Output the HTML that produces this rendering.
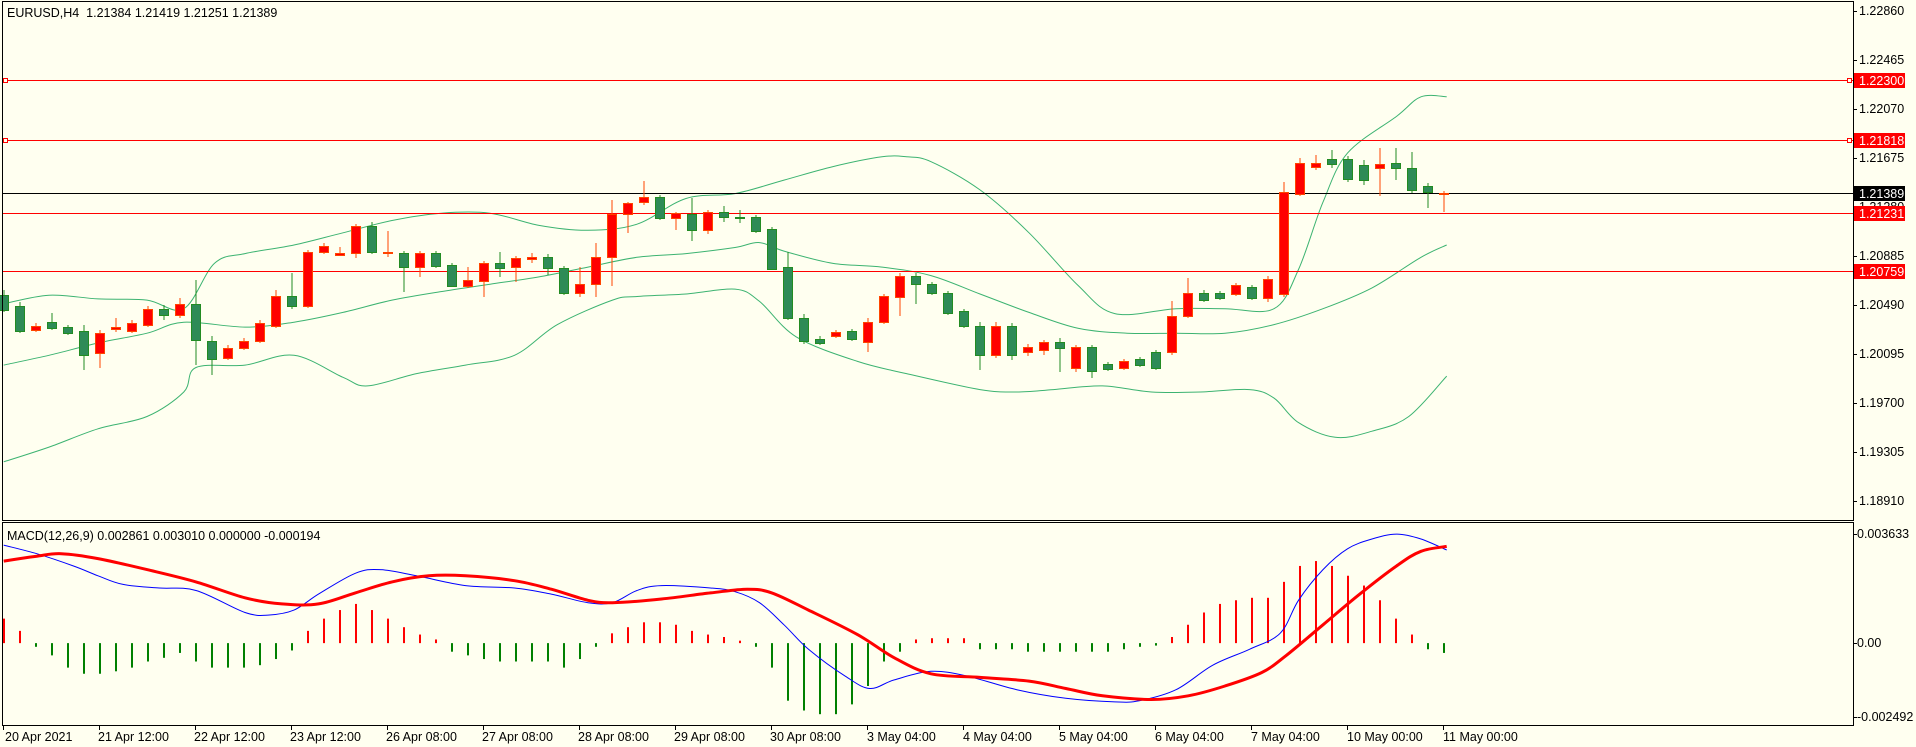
<!DOCTYPE html>
<html><head><meta charset="utf-8"><style>
html,body{margin:0;padding:0;background:#fffff0;}
svg{display:block;font-family:"Liberation Sans",sans-serif;font-size:12.5px;}
</style></head><body>
<svg id="s" width="1916" height="747" viewBox="0 0 1916 747" xmlns="http://www.w3.org/2000/svg">
<rect x="0" y="0" width="1916" height="747" fill="#fffff0"/>
<g id="bands" fill="none" stroke="#3cb371" stroke-width="1"></g>
<g id="hl">
<line x1="2" y1="80.5" x2="1853" y2="80.5" stroke="#ff0000"/>
<line x1="2" y1="140.5" x2="1853" y2="140.5" stroke="#ff0000"/>
<line x1="2" y1="193.5" x2="1853" y2="193.5" stroke="#000"/>
<line x1="2" y1="213.5" x2="1853" y2="213.5" stroke="#ff0000"/>
<line x1="2" y1="271.5" x2="1853" y2="271.5" stroke="#ff0000"/>
<rect x="3.5" y="78.5" width="4" height="4" fill="#fffff0" stroke="#ff0000"/>
<rect x="3.5" y="138.5" width="4" height="4" fill="#fffff0" stroke="#ff0000"/>
<rect x="1847.5" y="78.5" width="4" height="4" fill="#fffff0" stroke="#ff0000"/>
<rect x="1847.5" y="138.5" width="4" height="4" fill="#fffff0" stroke="#ff0000"/>
</g>
<g id="candles"></g>
<g id="macd"></g>
<rect x="2.5" y="1.5" width="1851" height="519" fill="none" stroke="#000"/>
<rect x="2.5" y="522.5" width="1851" height="203" fill="none" stroke="#000"/>
<g stroke="#000" id="ticks"></g>
<text x="7" y="17" fill="#000" xml:space="preserve">EURUSD,H4  1.21384 1.21419 1.21251 1.21389</text>
<text x="7" y="540" fill="#000">MACD(12,26,9) 0.002861 0.003010 0.000000 -0.000194</text>
<g fill="#000">
<text x="1859" y="15">1.22860</text>
<text x="1859" y="64">1.22465</text>
<text x="1859" y="113">1.22070</text>
<text x="1859" y="162">1.21675</text>
<text x="1859" y="211">1.21280</text>
<text x="1859" y="260">1.20885</text>
<text x="1859" y="309">1.20490</text>
<text x="1859" y="358">1.20095</text>
<text x="1859" y="407">1.19700</text>
<text x="1859" y="456">1.19305</text>
<text x="1859" y="505">1.18910</text>
<text x="1857" y="538">0.003633</text>
<text x="1857" y="647">0.00</text>
<text x="1857" y="721">-0.002492</text>
</g>
<rect x="1854" y="73" width="51" height="15" fill="#ff0000"/><text x="1859" y="85" fill="#fff">1.22300</text>
<rect x="1854" y="133" width="51" height="15" fill="#ff0000"/><text x="1859" y="145" fill="#fff">1.21818</text>
<rect x="1854" y="186" width="51" height="15" fill="#000"/><text x="1859" y="198" fill="#fff">1.21389</text>
<rect x="1854" y="206" width="51" height="15" fill="#ff0000"/><text x="1859" y="218" fill="#fff">1.21231</text>
<rect x="1854" y="264" width="51" height="15" fill="#ff0000"/><text x="1859" y="276" fill="#fff">1.20759</text>
<g fill="#000">
<text x="5" y="741">20 Apr 2021</text>
<text x="98" y="741">21 Apr 12:00</text>
<text x="194" y="741">22 Apr 12:00</text>
<text x="290" y="741">23 Apr 12:00</text>
<text x="386" y="741">26 Apr 08:00</text>
<text x="482" y="741">27 Apr 08:00</text>
<text x="578" y="741">28 Apr 08:00</text>
<text x="674" y="741">29 Apr 08:00</text>
<text x="770" y="741">30 Apr 08:00</text>
<text x="867" y="741">3 May 04:00</text>
<text x="963" y="741">4 May 04:00</text>
<text x="1059" y="741">5 May 04:00</text>
<text x="1155" y="741">6 May 04:00</text>
<text x="1251" y="741">7 May 04:00</text>
<text x="1347" y="741">10 May 00:00</text>
<text x="1443" y="741">11 May 00:00</text>
</g>
</svg>
<script>
var NS="http://www.w3.org/2000/svg",S=1.225;
function el(p,t,a){var e=document.createElementNS(NS,t);for(var k in a)e.setAttribute(k,a[k]);p.appendChild(e);return e;}
var tk=document.getElementById('ticks');
[11,60,109,158,207,256,305,354,403,452,501].forEach(function(y){el(tk,'line',{x1:1853,y1:y+.5,x2:1857,y2:y+.5});});
[534,643,717].forEach(function(y){el(tk,'line',{x1:1853,y1:y+.5,x2:1857,y2:y+.5});});
for(var i=0;i<16;i++){var x=3.5+96*i;el(tk,'line',{x1:x,y1:726,x2:x,y2:730});}
function pl(g,pts,attrs){var P=pts.map(function(p){return [p[0]*S,p[1]*S]});
var d='M'+P[0][0].toFixed(1)+','+P[0][1].toFixed(1);
for(var i=0;i<P.length-1;i++){var p0=P[Math.max(i-1,0)],p1=P[i],p2=P[i+1],p3=P[Math.min(i+2,P.length-1)];
var c1=[p1[0]+(p2[0]-p0[0])/6,p1[1]+(p2[1]-p0[1])/6],c2=[p2[0]-(p3[0]-p1[0])/6,p2[1]-(p3[1]-p1[1])/6];
d+=' C'+c1[0].toFixed(1)+','+c1[1].toFixed(1)+' '+c2[0].toFixed(1)+','+c2[1].toFixed(1)+' '+p2[0].toFixed(1)+','+p2[1].toFixed(1);}
attrs.d=d;el(g,'path',attrs);}
var bg=document.getElementById('bands');
var mid=[[3,298],[40,290],[80,280],[120,272],[150,263],[200,267],[240,263],[280,255],[320,245],[360,238],[400,232],[440,226],[480,218],[520,210],[560,207],[600,202],[620,198],[640,205],[680,215],[720,218],[760,225],[800,240],[840,255],[880,268],[920,272],[960,272],[1000,272],[1040,265],[1080,252],[1120,235],[1160,210],[1181,200]];
var up=[[3,248],[40,241],[80,244],[120,245],[150,252],[175,215],[200,207],[240,200],[280,190],[320,180],[360,174],[400,174],[440,184],[480,188],[520,183],[560,162],[600,158],[640,147],[680,136],[720,128],[740,128],[760,132],[800,155],[840,190],[880,233],[910,256],[960,252],[1000,252],[1040,252],[1060,220],[1080,165],[1100,125],[1140,95],[1160,79],[1181,79]];
var lo=[[3,377],[40,365],[80,350],[120,340],[150,320],[160,300],[200,298],[240,290],[280,308],[300,315],[340,305],[380,298],[420,290],[455,265],[500,245],[520,242],[560,240],[600,236],[620,246],[650,275],[700,295],[740,305],[800,318],[830,320],[860,318],[900,315],[940,320],[980,320],[1020,318],[1040,325],[1060,345],[1090,357],[1120,352],[1150,340],[1181,307]];
[mid,up,lo].forEach(function(p){pl(bg,p,{});});
var C=[
['g',295,310,290,312],['g',306,331,302,333],['r',326,330,323,332],['g',322,328,313,330],['g',327,333,325,335],['g',331,355,325,370],['r',333,353,330,368],['r',327,329,318,332],['r',323,331,320,333],['r',309,325,306,327],
['g',309,315,305,320],['r',304,315,298,318],['g',304,340,280,365],['g',341,359,336,375],['r',348,358,345,360],['r',341,348,338,350],['r',323,341,320,343],['r',296,326,290,328],['g',296,306,273,309],['r',252,306,250,308],
['r',246,252,243,254],['r',253,255,247,256],['r',226,253,224,258],['g',226,252,222,254],['r',252,253,231,257],['g',253,267,251,292],['r',253,267,251,277],['g',253,266,251,268],['g',265,286,263,287],['r',280,286,267,288],
['r',263,281,261,297],['g',263,268,252,277],['r',258,267,256,282],['r',257,259,253,263],['g',257,268,254,275],['g',268,293,266,295],['r',284,293,267,297],['r',257,284,243,297],['r',214,257,200,286],['r',203,214,202,233],
['r',197,202,181,205],['g',197,218,195,220],['r',213,218,212,230],['g',214,230,198,241],['r',212,230,210,234],['g',212,217,206,222],['g',217,218,210,223],['g',217,231,215,233],['g',229,269,227,270],['g',267,318,252,320],
['g',318,341,314,344],['g',339,343,336,345],['r',332,336,330,338],['g',331,339,329,341],['r',322,342,318,352],['r',296,322,294,324],['r',276,297,273,316],['g',276,284,273,304],['g',284,293,282,295],['g',293,313,291,315],
['g',311,326,309,328],['g',326,355,322,370],['r',326,355,322,358],['g',326,355,323,360],['r',347,352,344,356],['r',342,350,340,355],['g',342,348,338,372],['r',347,368,345,372],['g',347,371,345,378],['g',364,369,362,371],
['r',361,368,359,370],['g',359,365,357,367],['g',352,368,350,370],['r',316,352,301,355],['r',293,316,278,318],['g',293,300,290,302],['g',293,298,291,300],['r',285,294,283,296],['g',287,298,285,300],['r',279,298,276,302],
['r',192,294,182,297],['r',163,194,158,196],['r',163,167,155,170],['g',159,164,150,168],['g',159,179,156,182],['g',165,180,160,185],['r',164,168,148,196],['g',163,168,148,180],['g',168,190,152,193],['g',186,192,183,208],
['r',193,194,191,212]];
var cg=document.getElementById('candles');
C.forEach(function(c,k){var x=3.5+16*k;var red=c[0]=='r';var st=red?'#ff4500':'#228b22',fi=red?'#ff0000':'#2e8b57';
el(cg,'line',{x1:x+.5,y1:c[3],x2:x+.5,y2:c[4],stroke:st});
var h=Math.max(c[2]-c[1],1);
el(cg,'rect',{x:x-4,y:c[1]+.5,width:9,height:h,fill:fi,stroke:st});});
var H=[505,515,528,535,545,550,550,548,545,540,537,533,540,545,545,545,543,538,531,515,505,498,493,498,505,512,518,522,532,535,538,540,540,540,540,545,538,528,517,512,508,508,510,515,518,520,523,528,545,572,580,583,583,575,560,540,532,522,521,521,521,530,530,530,532,532,532,532,532,532,530,528,527,520,510,500,493,490,488,488,475,462,458,462,470,478,490,505,518,530,533];
var mg=document.getElementById('macd');var z=525*S;
H.forEach(function(v,k){var x=3.5+16*k;var y=v*S;var pos=y<z;
el(mg,'rect',{x:x-0.5,y:Math.min(y,z),width:2,height:Math.abs(y-z)||1,fill:pos?'#ff0000':'#008000'});});
var blue=[[3,445],[30,452],[60,462],[80,470],[100,477],[130,480],[160,482],[200,500],[220,502],[240,498],[260,485],[290,468],[310,465],[340,470],[380,478],[420,480],[450,485],[480,492],[500,492],[520,482],[540,478],[580,480],[600,483],[620,492],[640,510],[660,530],[690,552],[710,562],[730,555],[760,548],[790,552],[830,563],[870,570],[910,573],[930,572],[960,563],[990,543],[1020,530],[1045,517],[1060,490],[1080,465],[1100,448],[1120,440],[1140,436],[1160,440],[1181,449]];
var sig=[[3,458],[30,454],[50,452],[80,456],[120,465],[160,475],[200,488],[230,493],[260,493],[290,484],[320,475],[350,470],[380,470],[420,474],[450,481],[480,490],[500,492],[540,489],[580,484],[610,481],[630,484],[660,498],[700,518],[730,537],[760,550],[800,553],[840,556],[870,562],[900,568],[940,571],[970,568],[1000,560],[1030,549],[1050,535],[1080,510],[1110,485],[1140,462],[1160,450],[1181,446]];
pl(mg,blue,{fill:'none',stroke:'#0000ff','stroke-width':1});
pl(mg,sig,{fill:'none',stroke:'#ff0000','stroke-width':3});
</script>
</body></html>
